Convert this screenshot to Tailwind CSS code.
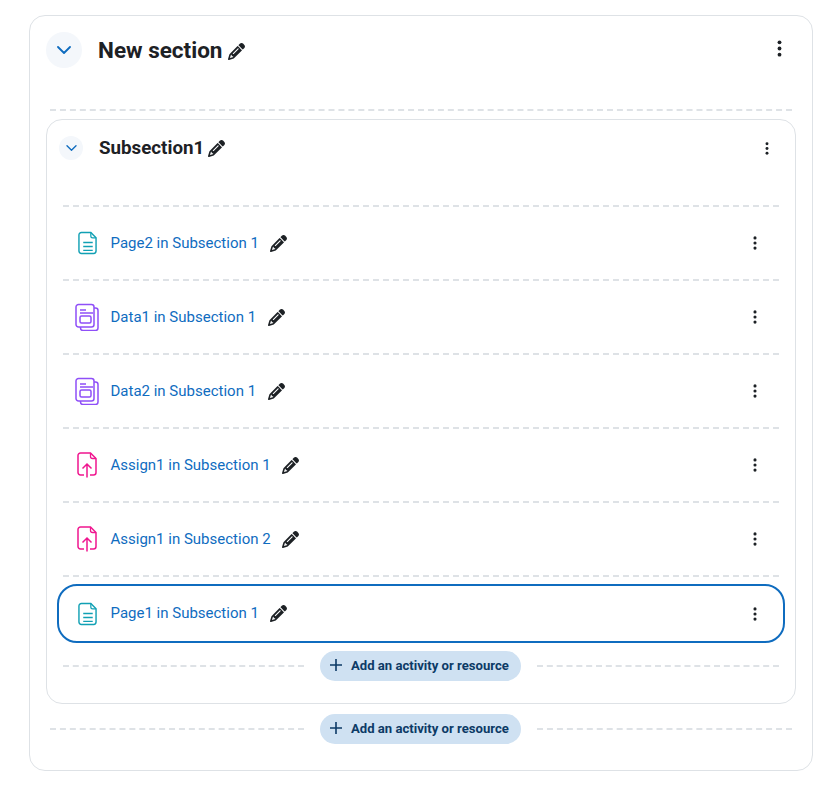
<!DOCTYPE html>
<html>
<head>
    <meta charset="UTF-8" />
    <script src="https://cdn.jsdelivr.net/npm/@tailwindcss/browser@4"></script>
    <title>Course section</title>
</head>
<body class="bg-white font-['Roboto',sans-serif] text-[#1d2125]">
<svg class="hidden">
    <symbol id="pencil" viewBox="0 0 512 512"><path fill="currentColor" d="M410.3 231l11.3-11.3-33.9-33.9-62.1-62.1L291.7 89.8l-11.3 11.3-22.6 22.6L58.6 322.9c-10.4 10.4-18 23.3-22.2 37.4L1 480.7c-2.5 8.4-.2 17.5 6.1 23.7s15.3 8.5 23.7 6.1l120.3-35.4c14.1-4.2 27-11.8 37.4-22.2L387.7 253.7 410.3 231zM160 399.4l-9.1 22.7c-4 3.1-8.5 5.4-13.3 6.9L59.4 452l23-78.1c1.4-4.9 3.8-9.4 6.9-13.3l22.7-9.1v32c0 8.8 7.2 16 16 16h32zM362.7 18.7L348.3 33.2 325.7 55.8 314.3 67.1l33.9 33.9 62.1 62.1 33.9 33.9 11.3-11.3 22.6-22.6 14.5-14.5c25-25 25-65.5 0-90.5L453.3 18.7c-25-25-65.5-25-90.5 0zm-47.4 168l-144 144c-6.2 6.2-16.4 6.2-22.6 0s-6.2-16.4 0-22.6l144-144c6.2-6.2 16.4-6.2 22.6 0s6.2 16.4 0 22.6z"/></symbol>
    <symbol id="dots" viewBox="0 0 4 16"><circle cx="2" cy="2.2" r="1.8" fill="currentColor"/><circle cx="2" cy="8" r="1.8" fill="currentColor"/><circle cx="2" cy="13.8" r="1.8" fill="currentColor"/></symbol>
    <symbol id="chevron" viewBox="0 0 14 8"><path d="M1 1l6 6 6-6" fill="none" stroke="currentColor" stroke-width="1.8" stroke-linecap="round" stroke-linejoin="round"/></symbol>
    <symbol id="page" viewBox="0 0 20 24"><path d="M3.500 1h10L19 6.500V20.500a2.500 2.500 0 0 1-2.500 2.500h-13A2.500 2.500 0 0 1 1 20.500V3.500A2.500 2.500 0 0 1 3.500 1z" fill="none" stroke="#11a0b4" stroke-width="1.500"/><path d="M13.500 1v3.500a2 2 0 0 0 2 2H19" fill="none" stroke="#11a0b4" stroke-width="1.300"/><path d="M5.500 11.500h10M5.500 15.600h10M5.500 19.800h10" stroke="#11a0b4" stroke-width="1.500"/></symbol>
    <symbol id="data" viewBox="0 0 24 28"><path d="M3.500 1.500h13A2.500 2.500 0 0 1 19 4v17.500a2.500 2.500 0 0 1-2.500 2.500h-13A2.500 2.500 0 0 1 1 21.500V4a2.500 2.500 0 0 1 2.500-2.500z" fill="none" stroke="#8f4ff8" stroke-width="1.500"/><path d="M19 5h1.500A2.500 2.500 0 0 1 23 7.500V25a2.500 2.500 0 0 1-2.500 2.500H8A2.500 2.500 0 0 1 5.500 25v-1" fill="none" stroke="#8f4ff8" stroke-width="1.500"/><path d="M5 7h6M5 10h13" stroke="#8f4ff8" stroke-width="1.500"/><rect x="5" y="13" width="11" height="7" rx="1.500" fill="none" stroke="#8f4ff8" stroke-width="1.500"/></symbol>
    <symbol id="assign" viewBox="0 0 20 26"><path d="M7 23H3.500A2.500 2.500 0 0 1 1 20.500v-17A2.500 2.500 0 0 1 3.500 1h10L19 6.500v14a2.500 2.500 0 0 1-2.500 2.500H13" fill="none" stroke="#f0168f" stroke-width="1.500"/><path d="M13.500 1v3.500a2 2 0 0 0 2 2H19" fill="none" stroke="#f0168f" stroke-width="1.300"/><path d="M10 25.500V12M5.500 16.500L10 12l4.500 4.500" fill="none" stroke="#f0168f" stroke-width="1.500"/></symbol>
    <symbol id="plus" viewBox="0 0 12 12"><path d="M6 0v12M0 6h12" stroke="currentColor" stroke-width="1.600"/></symbol>
</svg>

<div class="pt-[15px] pl-[29px]">
    <!-- Section card -->
    <div class="w-[784px] h-[756px] border border-[#dee2e6] rounded-[16px] pl-[16px] pr-[16px] pt-[16px]">
        <div class="flex items-center h-[36px]">
            <div class="w-[36px] h-[36px] rounded-full bg-[#f4f7fb] flex items-center justify-center text-[#0f6cbf]">
                <svg class="w-[14px] h-[8px]"><use href="#chevron"/></svg>
            </div>
            <h2 class="ml-[16px] text-[22.5px] leading-[36px] font-bold">New section</h2>
            <svg class="ml-[5.500px] mt-[2px] w-[17px] h-[17px]"><use href="#pencil"/></svg>
            <svg class="ml-auto mr-[14px] -mt-[4px] w-[5px] h-[17px]"><use href="#dots"/></svg>
        </div>

        <div class="mt-[41px] ml-[4px] mr-[4px] border-t-2 border-dashed border-[#dee2e6]"></div>

        <!-- Subsection card -->
        <div class="mt-[8px] w-[750px] h-[585px] border border-[#dee2e6] rounded-[16px]">
            <div class="flex items-center h-[24px] mt-[16px] ml-[12px]">
                <div class="w-[24px] h-[24px] rounded-full bg-[#f4f7fb] flex items-center justify-center text-[#0f6cbf]">
                    <svg class="w-[11px] h-[6px]"><use href="#chevron"/></svg>
                </div>
                <h3 class="ml-[16px] text-[18.75px] leading-[24px] font-bold">Subsection1</h3>
                <svg class="ml-[4px] w-[17px] h-[17px]"><use href="#pencil"/></svg>
                <svg class="ml-auto mr-[26px] w-[4px] h-[13px]"><use href="#dots"/></svg>
            </div>

            <div class="mt-[45px]">
                <div class="mx-[16px] border-t-2 border-dashed border-[#dee2e6]"></div>
                <div class="flex items-center h-[72px] ml-[31px] mr-[38px]">
                    <svg class="w-[19px] h-[24px]"><use href="#page"/></svg>
                    <a class="ml-[13.500px] text-[15px] text-[#0f6cbf]">Page2 in Subsection 1</a>
                    <svg class="ml-[11.500px] w-[17px] h-[17px]"><use href="#pencil"/></svg>
                    <svg class="ml-auto w-[4px] h-[14px]"><use href="#dots"/></svg>
                </div>
                <div class="mx-[16px] border-t-2 border-dashed border-[#dee2e6]"></div>
                <div class="flex items-center h-[72px] ml-[28px] mr-[38px]">
                    <svg class="w-[24px] h-[28px]"><use href="#data"/></svg>
                    <a class="ml-[11.500px] text-[15px] text-[#0f6cbf]">Data1 in Subsection 1</a>
                    <svg class="ml-[11.500px] w-[17px] h-[17px]"><use href="#pencil"/></svg>
                    <svg class="ml-auto w-[4px] h-[14px]"><use href="#dots"/></svg>
                </div>
                <div class="mx-[16px] border-t-2 border-dashed border-[#dee2e6]"></div>
                <div class="flex items-center h-[72px] ml-[28px] mr-[38px]">
                    <svg class="w-[24px] h-[28px]"><use href="#data"/></svg>
                    <a class="ml-[11.500px] text-[15px] text-[#0f6cbf]">Data2 in Subsection 1</a>
                    <svg class="ml-[11.500px] w-[17px] h-[17px]"><use href="#pencil"/></svg>
                    <svg class="ml-auto w-[4px] h-[14px]"><use href="#dots"/></svg>
                </div>
                <div class="mx-[16px] border-t-2 border-dashed border-[#dee2e6]"></div>
                <div class="flex items-center h-[72px] ml-[30px] mr-[38px]">
                    <svg class="w-[20px] h-[26px]"><use href="#assign"/></svg>
                    <a class="ml-[13.500px] text-[15px] text-[#0f6cbf]">Assign1 in Subsection 1</a>
                    <svg class="ml-[11.500px] w-[17px] h-[17px]"><use href="#pencil"/></svg>
                    <svg class="ml-auto w-[4px] h-[14px]"><use href="#dots"/></svg>
                </div>
                <div class="mx-[16px] border-t-2 border-dashed border-[#dee2e6]"></div>
                <div class="flex items-center h-[72px] ml-[30px] mr-[38px]">
                    <svg class="w-[20px] h-[26px]"><use href="#assign"/></svg>
                    <a class="ml-[13.500px] text-[15px] text-[#0f6cbf]">Assign1 in Subsection 2</a>
                    <svg class="ml-[11.500px] w-[17px] h-[17px]"><use href="#pencil"/></svg>
                    <svg class="ml-auto w-[4px] h-[14px]"><use href="#dots"/></svg>
                </div>
                <div class="mx-[16px] border-t-2 border-dashed border-[#dee2e6]"></div>
                <div class="flex items-center h-[59px] mt-[7px] ml-[10px] mr-[10px] pl-[19px] pr-[26px] border-2 border-[#0f6cbf] rounded-[20px]">
                    <svg class="w-[19px] h-[24px]"><use href="#page"/></svg>
                    <a class="ml-[13.500px] text-[15px] text-[#0f6cbf]">Page1 in Subsection 1</a>
                    <svg class="ml-[11.500px] w-[17px] h-[17px]"><use href="#pencil"/></svg>
                    <svg class="ml-auto w-[4px] h-[14px]"><use href="#dots"/></svg>
                </div>
                <div class="flex items-center mt-[8px] ml-[16px] mr-[16px]">
                    <div class="w-[241px] border-t-2 border-dashed border-[#dee2e6]"></div>
                    <button class="mx-[16px] w-[201px] h-[30px] pl-[10px] rounded-full bg-[#cfe1f2] text-[#0c3a66] flex items-center text-[13.125px] font-bold">
                        <svg class="w-[12px] h-[12px] mr-[9px] -mt-[2px]"><use href="#plus"/></svg>Add an activity or resource
                    </button>
                    <div class="grow border-t-2 border-dashed border-[#dee2e6]"></div>
                </div>
            </div>
        </div>

        <div class="flex items-center mt-[10px] ml-[4px] mr-[4px]">
            <div class="w-[254px] border-t-2 border-dashed border-[#dee2e6]"></div>
            <button class="mx-[16px] w-[201px] h-[30px] pl-[10px] rounded-full bg-[#cfe1f2] text-[#0c3a66] flex items-center text-[13.125px] font-bold">
                <svg class="w-[12px] h-[12px] mr-[9px] -mt-[2px]"><use href="#plus"/></svg>Add an activity or resource
            </button>
            <div class="grow border-t-2 border-dashed border-[#dee2e6]"></div>
        </div>
    </div>
</div>
</body>
</html>
